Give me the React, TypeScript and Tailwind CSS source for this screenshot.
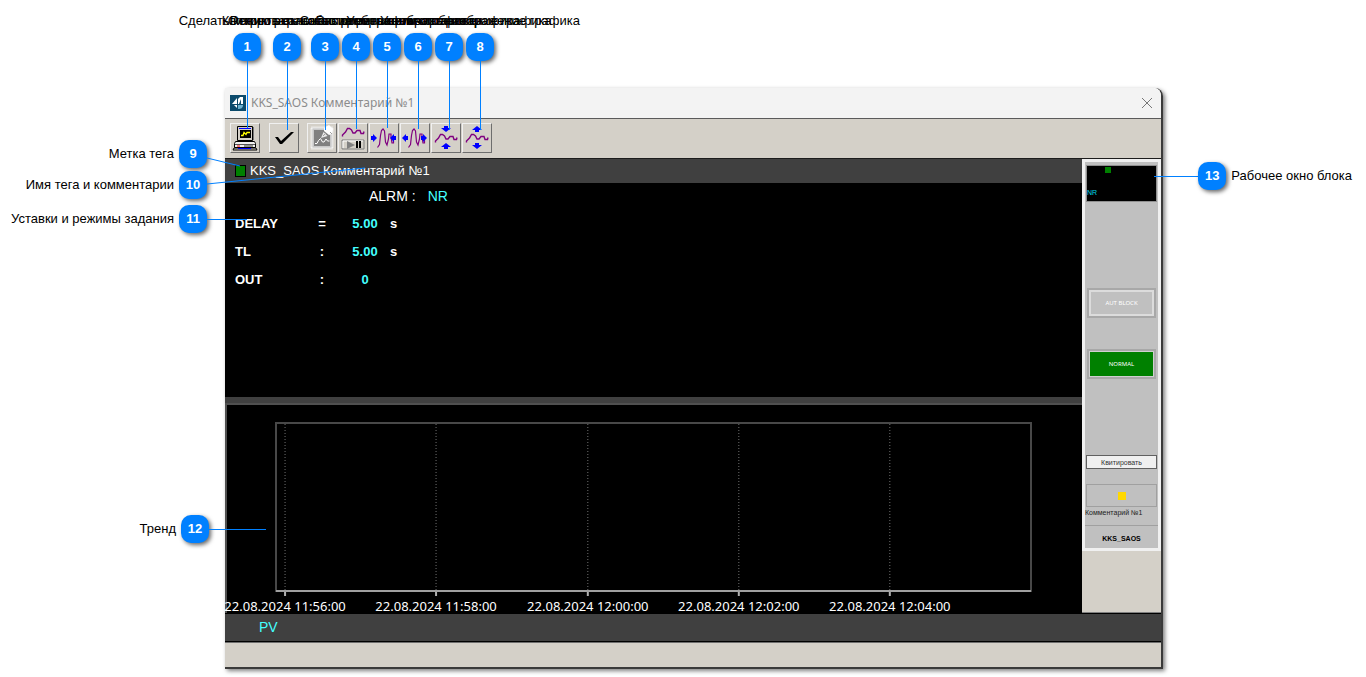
import { ReactNode } from 'react';

interface ToolButton {
  title: string;
  gap?: string;
  icon: ReactNode;
}

interface TopCallout {
  num: number;
  pos: string;
  line: string;
}

interface SideCallout {
  num: number;
  text: string;
  pos: string;
}

function WaveTall() {
  return (
    <path
      d="M7.500 23.500l2-3 1-9 1-5 1.500-1.500 1.500 2 1 11 1.500 3 1.500-6 .5-5h2v3l1 6h1.500v-4"
      stroke="#800080"
      strokeWidth="1.200"
    />
  );
}

function WaveLow({ y = 0 }: { y?: number }) {
  return (
    <path
      transform={`translate(0 ${y})`}
      d="M3.500 18.500v-1.500l3-3 2-3.500h2l2 1.500 1.500 3h2l2-2.500h3l1 3h2.500l.5-2"
      stroke="#800080"
      strokeWidth="1.400"
    />
  );
}

function ArrowH({ x, left }: { x: number; left?: boolean }) {
  return (
    <path
      fill="#0000ff"
      d={left ? `M${x} 14l4-4v2h2v4h-2v2z` : `M${x + 6} 14l-4-4v2h-2v4h2v2z`}
    />
  );
}

function ArrowV({ y, up }: { y: number; up?: boolean }) {
  return (
    <path
      fill="#0000ff"
      d={up ? `M14 ${y}l5 4h-3v2h-4v-2h-3z` : `M14 ${y + 6}l5-4h-3v-2h-4v2h-3z`}
    />
  );
}

function IconSvg({ children }: { children: ReactNode }) {
  return (
    <svg width="28" height="28" viewBox="0 0 28 28" fill="none" aria-hidden="true">
      {children}
    </svg>
  );
}

const tools: ToolButton[] = [
  {
    title: 'Сделать копию экрана',
    icon: (
      <IconSvg>
        <path d="M6.500 2.500h15v14h-15z" fill="#d4d0c8" stroke="#000" />
        <path d="M22.500 3v13" stroke="#777" />
        <path d="M8 4.500h12" stroke="#0000ff" />
        <path d="M9 6h11v8H9z" fill="#000" />
        <path d="M10 11.500h2l1-3 2 2 1-2h3" stroke="#ffff00" strokeWidth="1.300" />
        <path d="M4.500 17.500h19l1 2v4h-21v-4z" fill="#f0f0f0" stroke="#000" />
        <path d="M4 20.500h20" stroke="#555" />
        <path d="M6 22h3" stroke="#ff0000" />
        <path d="M13 22h9" stroke="#333" />
        <path d="M3 24h22l1 2H2z" fill="#d4d0c8" stroke="#000" />
        <path d="M7 24.500h13" stroke="#0000ff" />
      </IconSvg>
    ),
  },
  {
    title: 'Квитировать событие',
    gap: 'ml-2',
    icon: (
      <IconSvg>
        <path d="M5 13h3l3 4 10-9h3L12 20h-2z" fill="#000" />
      </IconSvg>
    ),
  },
  {
    title: 'Открыть окно настроек графика',
    gap: 'ml-[7px]',
    icon: (
      <IconSvg>
        <path d="M3.500 3.500h21v21h-21z" fill="#c8c8c8" stroke="#fff" strokeWidth="2" strokeDasharray="1 1" />
        <rect x="6" y="6" width="16" height="16" fill="#808080" />
        <path d="M7 19.500h2l1.500-3 2-2 2 3.500h1.500l2-3 1.500 2h2" stroke="#fff" />
        <path d="M13 14l2.500-6 4 4z" fill="#e8e8e8" />
        <path d="M16 4l5-3 4 4-1 5-3 1-5-4z" fill="#fff" />
        <path d="M15 12l3-3M22 8l2 2" stroke="#a0a0a0" />
      </IconSvg>
    ),
  },
  {
    title: 'Режим реального времени или остановки',
    icon: (
      <IconSvg>
        <WaveLow y={-6} />
        <path d="M3 16h22v9H3z" stroke="#808080" />
        <path d="M4 24V17h20" stroke="#fff" />
        <path d="M8 17l8 4-8 4z" fill="#808080" />
        <path d="M17 17h2v7h-2zM20 17h2v7h-2z" fill="#000" />
      </IconSvg>
    ),
  },
  {
    title: 'Сжать отображение графика',
    icon: (
      <IconSvg>
        <WaveTall />
        <ArrowH x={1} />
        <ArrowH x={20} left />
      </IconSvg>
    ),
  },
  {
    title: 'Расширить отображение графика',
    icon: (
      <IconSvg>
        <WaveTall />
        <ArrowH x={1} left />
        <ArrowH x={20} />
      </IconSvg>
    ),
  },
  {
    title: 'Уменьшить отображение графика',
    icon: (
      <IconSvg>
        <WaveLow />
        <ArrowV y={2} />
        <ArrowV y={19} up />
      </IconSvg>
    ),
  },
  {
    title: 'Увеличить отображение графика',
    icon: (
      <IconSvg>
        <WaveLow />
        <ArrowV y={2} up />
        <ArrowV y={19} />
      </IconSvg>
    ),
  },
];

// one per toolbar button, in the same order
const topCallouts: TopCallout[] = [
  { num: 1, pos: 'left-[233px]', line: 'h-[67px]' },
  { num: 2, pos: 'left-[273px]', line: 'h-[69px]' },
  { num: 3, pos: 'left-[311px]', line: 'h-[69px]' },
  { num: 4, pos: 'left-[342px]', line: 'h-[68px]' },
  { num: 5, pos: 'left-[373px]', line: 'h-[67px]' },
  { num: 6, pos: 'left-[404px]', line: 'h-[68px]' },
  { num: 7, pos: 'left-[435px]', line: 'h-[69px]' },
  { num: 8, pos: 'left-[466px]', line: 'h-[69px]' },
];

const sideCallouts: SideCallout[] = [
  { num: 9, text: 'Метка тега', pos: 'top-[140px] w-[207px]' },
  { num: 10, text: 'Имя тега и комментарии', pos: 'top-[171px] w-[207px]' },
  { num: 11, text: 'Уставки и режимы задания', pos: 'top-[205px] w-[207px]' },
  { num: 12, text: 'Тренд', pos: 'top-[515px] w-[209px]' },
];

const params = [
  { name: 'DELAY', sep: '=', value: '5.00', unit: 's' },
  { name: 'TL', sep: ':', value: '5.00', unit: 's' },
  { name: 'OUT', sep: ':', value: '0', unit: '' },
];

const ticks = [
  { x: '1.2%', label: '22.08.2024 11:56:00' },
  { x: '21.2%', label: '22.08.2024 11:58:00' },
  { x: '41.3%', label: '22.08.2024 12:00:00' },
  { x: '61.3%', label: '22.08.2024 12:02:00' },
  { x: '81.3%', label: '22.08.2024 12:04:00' },
];

function Badge({ num }: { num: number }) {
  return (
    <span className="flex size-7 shrink-0 items-center justify-center rounded-[10px] bg-[#0080ff] text-[13px] font-bold text-white shadow-[2px_2px_4px_rgba(0,0,0,0.6)]">
      {num}
    </span>
  );
}

function Callouts() {
  return (
    <div className="text-[13px] leading-4 whitespace-nowrap">
      {topCallouts.map((c, i) => (
        <div key={c.num} className={`absolute top-[13px] flex w-7 flex-col items-center ${c.pos}`}>
          <span className="mb-1">{tools[i].title}</span>
          <Badge num={c.num} />
          <span className={`w-px bg-[#0080ff] ${c.line}`} />
        </div>
      ))}
      {sideCallouts.map((c) => (
        <div key={c.num} className={`absolute left-0 flex items-center justify-end gap-[5px] ${c.pos}`}>
          <span>{c.text}</span>
          <Badge num={c.num} />
        </div>
      ))}
      <div className="absolute top-[162px] right-[14px] flex items-center">
        <span className="h-px w-11 bg-[#0080ff]" />
        <Badge num={13} />
        <span className="ml-[5px]">Рабочее окно блока</span>
      </div>
      <svg
        className="pointer-events-none absolute top-0 left-0 h-[540px] w-[380px]"
        fill="none"
        stroke="#0080ff"
        aria-hidden="true"
      >
        <path d="M207 158l33 8M207 184l158-16M207 219.500h40M209 529.500h57" />
      </svg>
    </div>
  );
}

function TitleBar() {
  return (
    <header className="flex h-[31px] items-center rounded-tr-lg border-b border-[#5a5a5a] bg-[#f3f3f3] pr-[6px] pl-[5px]">
      <svg width="16" height="16" viewBox="0 0 16 16" aria-hidden="true">
        <rect width="16" height="16" fill="#0b4a6b" />
        <path d="M2 9l5-6v6z" fill="#fff" />
        <path d="M8 9V4l2-2h3v7h-2V4L9 9z" fill="#fff" />
        <path d="M8 10h5c0 3-2 4-5 4z" fill="#6bb1cf" />
        <path d="M4 10h3v3z" fill="#fff" />
      </svg>
      <h1 className="ml-[5px] flex-1 font-['Noto_Sans',sans-serif] text-[12px] text-[#8c8c8c]">
        KKS_SAOS Комментарий №1
      </h1>
      <button type="button" aria-label="Закрыть" className="p-[2px]">
        <svg width="12" height="12" viewBox="0 0 12 12" stroke="#777" aria-hidden="true">
          <path d="M1 1l10 10M11 1L1 11" />
        </svg>
      </button>
    </header>
  );
}

function Toolbar() {
  return (
    <div className="flex h-10 items-start gap-px border-b border-[#1c1c1c] bg-[#d4d0c8] pt-1 pl-[5px]">
      {tools.map((t) => (
        <button
          key={t.title}
          type="button"
          aria-label={t.title}
          className={`size-[30px] border border-t-[#f0f0f0] border-r-[#6e6e6e] border-b-[#6e6e6e] border-l-[#f0f0f0] ${t.gap ?? ''}`}
        >
          {t.icon}
        </button>
      ))}
    </div>
  );
}

function Params() {
  return (
    <section className="h-[214px] bg-black text-white">
      <p className="flex h-[27px] items-center gap-3 pl-[144px] text-[14px]">
        <span>ALRM :</span>
        <span className="text-[#4ff]">NR</span>
      </p>
      <table className="ml-[10px] text-[13px] font-bold">
        <tbody>
          {params.map((p) => (
            <tr key={p.name} className="h-7">
              <th scope="row" className="w-[69px] p-0 text-left">{p.name}</th>
              <td className="w-9 p-0 text-center">{p.sep}</td>
              <td className="w-[50px] p-0 text-center text-[#4ff]">{p.value}</td>
              <td className="p-0">{p.unit}</td>
            </tr>
          ))}
        </tbody>
      </table>
    </section>
  );
}

function Trend() {
  return (
    <section className="h-[210px] border-t-2 border-l-2 border-[#505050] bg-black pt-[18px] pr-[51px] pl-[49px]">
      <svg className="block h-[168px] w-full overflow-visible" role="img" aria-label="Тренд">
        <rect width="100%" height="168" fill="none" stroke="#484848" strokeWidth="2" />
        {ticks.map((t) => (
          <g key={t.x}>
            <line x1={t.x} x2={t.x} y1="1" y2="167" stroke="#707070" strokeDasharray="1 2" />
            <line x1={t.x} x2={t.x} y1="168" y2="173" stroke="#b0b0b0" strokeWidth="2" />
            <text x={t.x} y="188" textAnchor="middle" fill="#fff" className="font-['Noto_Sans',sans-serif] text-[13px]">
              {t.label}
            </text>
          </g>
        ))}
        <line x1="0" x2="100%" y1="168" y2="168" stroke="#a0a0a0" strokeWidth="2" />
      </svg>
    </section>
  );
}

function Faceplate() {
  return (
    <aside className="w-[79px] shrink-0 border-b border-[#808080] bg-[#d4d0c8]">
      <div className="flex h-[392px] flex-col border-[3px] border-[#f0f0f0] bg-[#c0c0c0] px-px pt-[3px] text-[7px] leading-[9px]">
        <div className="h-[37px] border border-[#909090] bg-black">
          <span className="mt-px ml-[18px] block size-[6px] bg-[#008000]" />
          <span className="mt-[15px] block text-[#00d8e8]">NR</span>
        </div>
        <button
          type="button"
          className="mx-px mt-[86px] h-[30px] border-2 border-[#a8a8a8] font-['Noto_Sans',sans-serif] text-[6px] text-white"
        >
          <span className="flex h-full items-center justify-center border-2 border-[#dcdcdc]">AUT BLOCK</span>
        </button>
        <button
          type="button"
          className="mx-px mt-[31px] h-[30px] border-2 border-[#a8a8a8] font-['Noto_Sans',sans-serif] text-[6px] text-white"
        >
          <span className="flex h-full items-center justify-center border border-[#d0d0d0] bg-[#008000]">NORMAL</span>
        </button>
        <button type="button" className="mt-[76px] h-[14px] border border-[#606060] bg-[#f0f0f0] text-[#333]">
          Квитировать
        </button>
        <div className="mt-[15px] flex h-[23px] items-center justify-center border border-[#a0a0a0]">
          <span className="size-2 bg-[#ffd800]" />
        </div>
        <p className="-mx-px mt-px h-[18px] border-b border-[#a0a0a0] whitespace-nowrap text-[#222]">Комментарий №1</p>
        <p className="mt-2 text-center font-bold">KKS_SAOS</p>
      </div>
    </aside>
  );
}

export default function App() {
  return (
    <div className="relative min-w-[900px] bg-white pt-[88px] pr-[203px] pb-2 pl-[225px] font-['Liberation_Sans',Arial,sans-serif] text-black">
      <main className="rounded-tr-lg border-r-2 border-b-2 border-[#3a3a3a] shadow-[2px_2px_4px_rgba(0,0,0,0.5)]">
        <TitleBar />
        <Toolbar />
        <div className="flex">
          <div className="min-w-0 flex-1">
            <h2 className="flex h-6 items-center gap-1 bg-[#404040] pl-[10px] text-[13px] text-white">
              <span className="h-3 w-[11px] border border-black bg-[#008000]" />
              KKS_SAOS Комментарий №1
            </h2>
            <Params />
            <div className="h-[6px] bg-[#404040]" />
            <Trend />
          </div>
          <Faceplate />
        </div>
        <div className="h-[29px] border-y border-black bg-[#404040] pl-[34px] text-[14px] leading-[27px] text-[#4ff]">PV</div>
        <footer className="h-[25px] border-t border-[#6e6e6e] bg-[#d4d0c8]" />
      </main>
      <Callouts />
    </div>
  );
}
